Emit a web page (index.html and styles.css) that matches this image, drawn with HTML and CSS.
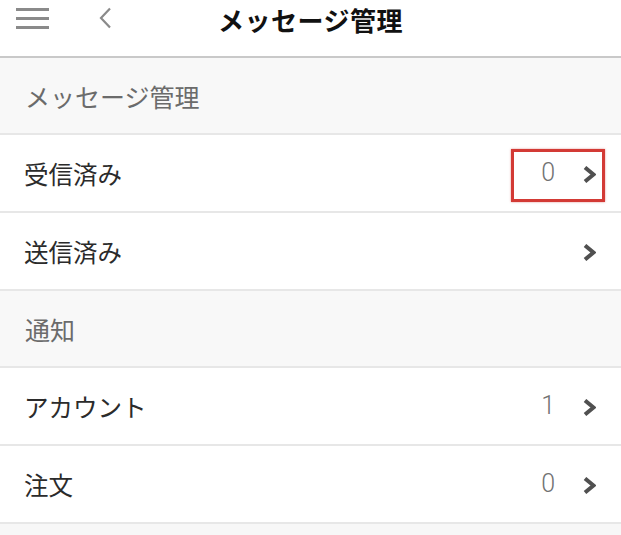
FILE: index.html
```html
<!DOCTYPE html>
<html lang="ja">
<head>
<meta charset="utf-8">
<title>メッセージ管理</title>
<link rel="stylesheet" href="styles.css">
</head>
<body>
<header class="topbar">
  <div class="topbar-left">
    <svg class="menu-icon" width="33" height="21" viewBox="0 0 33 21" aria-hidden="true">
      <rect x="0" y="0" width="33" height="3" fill="#8a8a8a"/>
      <rect x="0" y="9" width="33" height="3" fill="#8a8a8a"/>
      <rect x="0" y="18" width="33" height="3" fill="#8a8a8a"/>
    </svg>
    <svg class="back-icon" width="14" height="22" viewBox="0 0 14 22" aria-hidden="true">
      <path d="M12 1.5 L3 11 L12 20.5" fill="none" stroke="#8a8a8a" stroke-width="2.2" stroke-linejoin="miter"/>
    </svg>
  </div>
  <h1 class="title">メッセージ管理</h1>
</header>

<main class="list">
  <div class="section">メッセージ管理</div>
  <div class="row">
    <span class="label">受信済み</span>
    <span class="trail">
      <span class="count">0</span>
      <svg class="chev" width="13" height="17" viewBox="0 0 13 17" aria-hidden="true"><path d="M2 1.5 L10.5 8.5 L2 15.5" fill="none" stroke="#505050" stroke-width="4"/></svg>
      <span class="mark"></span>
    </span>
  </div>
  <div class="row">
    <span class="label">送信済み</span>
    <span class="trail">
      <svg class="chev" width="13" height="17" viewBox="0 0 13 17" aria-hidden="true"><path d="M2 1.5 L10.5 8.5 L2 15.5" fill="none" stroke="#505050" stroke-width="4"/></svg>
    </span>
  </div>
  <div class="section">通知</div>
  <div class="row">
    <span class="label">アカウント</span>
    <span class="trail">
      <span class="count">1</span>
      <svg class="chev" width="13" height="17" viewBox="0 0 13 17" aria-hidden="true"><path d="M2 1.5 L10.5 8.5 L2 15.5" fill="none" stroke="#505050" stroke-width="4"/></svg>
    </span>
  </div>
  <div class="row">
    <span class="label">注文</span>
    <span class="trail">
      <span class="count">0</span>
      <svg class="chev" width="13" height="17" viewBox="0 0 13 17" aria-hidden="true"><path d="M2 1.5 L10.5 8.5 L2 15.5" fill="none" stroke="#505050" stroke-width="4"/></svg>
    </span>
  </div>
</main>
</body>
</html>
```

FILE: styles.css
```css
html, body {
  margin: 0;
  padding: 0;
}
body {
  background: #f7f7f7;
  font-family: "Noto Sans CJK JP", "Noto Sans", "Liberation Sans", sans-serif;
  width: 621px;
  height: 535px;
  overflow: hidden;
}
.topbar {
  height: 56px;
  background: #ffffff;
  border-bottom: 2px solid #c9c9c9;
  position: relative;
  display: flex;
  justify-content: center;
  align-items: flex-start;
}
.topbar-left {
  position: absolute;
  left: 16px;
  top: 8px;
  display: flex;
  align-items: flex-start;
  gap: 49px;
}
.back-icon {
  margin-top: -1px;
}
.title {
  margin: 0;
  padding-top: 1px;
  font-size: 26px;
  line-height: 38px;
  font-weight: 700;
  color: #111;
  letter-spacing: 0.5px;
}
.list {
  display: flex;
  flex-direction: column;
}
.section {
  height: 75px;
  border-bottom: 2px solid #e7e7e7;
  background: #f8f8f8;
  display: flex;
  align-items: center;
  padding-left: 25px;
  font-size: 25px;
  color: #6b6b6b;
}
.row {
  height: 76px;
  border-bottom: 2px solid #e7e7e7;
  background: #ffffff;
  display: flex;
  align-items: center;
  justify-content: space-between;
  padding: 0 25px 0 24px;
}
.label {
  font-size: 24.5px;
  color: #2b2b2b;
}
.trail {
  display: flex;
  align-items: center;
  gap: 28px;
  position: relative;
}
.count {
  font-family: Roboto, "Liberation Sans", sans-serif;
  font-weight: 300;
  font-size: 25px;
  line-height: 30px;
  color: #727272;
}
.chev {
  display: block;
  margin-top: 3px;
}
.mark {
  position: absolute;
  left: -30px;
  right: -9px;
  top: -9px;
  bottom: -14px;
  border: 3px solid #d33a35;
  box-shadow: 0 0 2px rgba(200, 40, 40, 0.5);
}
```
